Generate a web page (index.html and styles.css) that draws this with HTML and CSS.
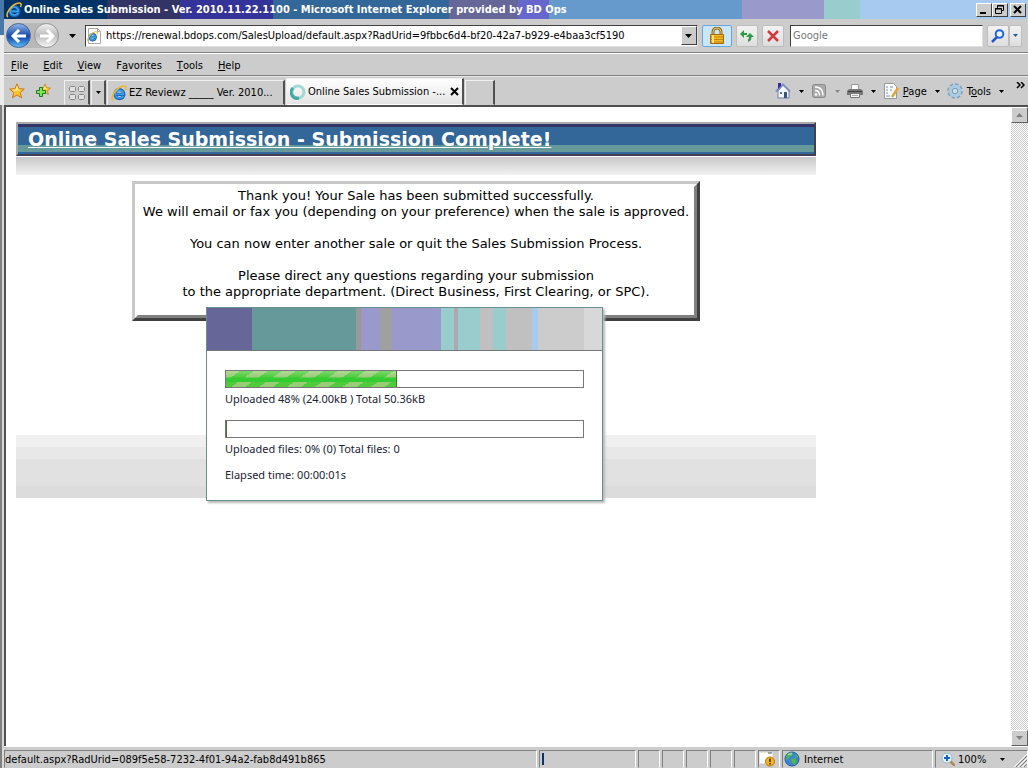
FILE: index.html
```
<!DOCTYPE html>
<html lang="en">
  <head>
    <meta charset="utf-8">
    <title>Online Sales Submission</title>
    <link rel="stylesheet" href="styles.css">
  </head>

  <body>
    <svg class="defs" aria-hidden="true">
      <symbol id="arrow" viewBox="0 0 7 4"><path d="M0 0h7L3.5 4z" fill="currentColor"/></symbol>
      <symbol id="ie" viewBox="0 0 16 16">
        <path d="M12.500 10.800C11.300 14.600 4 14.800 4 9c0-6 8.800-5.800 8.800.3H5.500" fill="none" stroke="#1765b8" stroke-width="3.200"/>
        <path d="M12.200 10.800C11 14 4.300 14 4.300 9c0-5.300 8-5 8 .3H5.500" fill="none" stroke="#3ba0ee" stroke-width="1.600"/>
        <path d="M2 15C-1.200 12.500 5.500 1.500 13.300 1c2.200-.1 2.200 1.800 1.200 4" fill="none" stroke="#efb72b" stroke-width="1.600"/>
      </symbol>
      <symbol id="star" viewBox="0 0 16 16"><path d="M8 .8l2 4.900 5.300.4-4.100 3.400 1.300 5.200L8 11.900l-4.500 2.800 1.300-5.200L.7 6.100 6 5.700z" fill="#ffc52e" stroke="#c77a12"/><path d="M8 2.500l1.300 4L13 7l-8 1-2-1.200 3.500-.3z" fill="#ffe98a"/></symbol>
    </svg>

    <div class="behind">
      <div class="behind_title"></div>
      <div class="behind_body"></div>
    </div>

    <div class="window">
      <div class="titlebar">
        <svg class="icon"><use href="#ie"/></svg>
        <span class="title">Online Sales Submission - Ver. 2010.11.22.1100 - Microsoft Internet Explorer provided by BD Ops</span>
        <button class="win_button" aria-label="Minimize"><svg width="10" height="9"><path d="M1 7h6v2H1z"/></svg></button>
        <button class="win_button" aria-label="Restore"><svg width="10" height="9"><path d="M2.500 3V.5h6v5H7M.5 3.500h6v5h-6zM2 1h7M0 4h7" fill="none" stroke="#000"/></svg></button>
        <button class="win_button close" aria-label="Close"><svg width="10" height="9"><path d="M1 1l7 7M8 1L1 8" stroke="#000" stroke-width="2"/></svg></button>
      </div>

      <div class="navbar">
        <div class="travel">
          <button class="round back" aria-label="Back"><svg width="16" height="14"><path d="M8 1L2 7l6 6M2 7h13" fill="none" stroke="#fff" stroke-width="3"/></svg></button>
          <button class="round forward" aria-label="Forward"><svg width="16" height="14"><path d="M8 1l6 6-6 6M14 7H1" fill="none" stroke="#fff" stroke-width="3"/></svg></button>
        </div>
        <button class="drop" aria-label="Recent pages"><svg class="arrow"><use href="#arrow"/></svg></button>
        <div class="address">
          <svg class="icon"><path d="M2.500.5h9l3 3v12h-12z" fill="#fff" stroke="#aaa"/><path d="M11.500.5v3h3" fill="none" stroke="#aaa"/><use href="#ie" x="1" y="3" width="11" height="11"/></svg>
          <input type="text" aria-label="Address" value="https://renewal.bdops.com/SalesUpload/default.aspx?RadUrid=9fbbc6d4-bf20-42a7-b929-e4baa3cf5190">
          <button class="combo" aria-label="Show addresses"><svg class="arrow"><use href="#arrow"/></svg></button>
        </div>
        <button class="tool lock" aria-label="Security report">
          <svg width="16" height="18"><path d="M4 8V5a4 4 0 0 1 8 0v3" fill="none" stroke="#8d6a20" stroke-width="3"/><path d="M4 8V5a4 4 0 0 1 8 0v3" fill="none" stroke="#e6c45e"/><path d="M1.500 7.500h13v9h-13z" fill="#f5b921" stroke="#a56a0c"/><path d="M2 10h12M2 12.500h12M2 15h12" stroke="#c5820f"/><path d="M3 8h2v8H3z" fill="#ffe27a"/></svg>
        </button>
        <button class="tool" aria-label="Refresh">
          <svg width="14" height="12"><path d="M4 0L0 4l4 4V5h3V3H4z" fill="#2d9c43"/><path d="M10 3l4 4h-2.500q0 4-3.500 5V9.500Q9 9 9 7H6z" fill="#2d9c43"/></svg>
        </button>
        <button class="tool" aria-label="Stop">
          <svg width="14" height="14"><path d="M2 2l10 10M12 2L2 12" stroke="#d3363b" stroke-width="2.500"/></svg>
        </button>
        <input class="search" type="text" aria-label="Search" placeholder="Google">
        <div class="search_buttons">
          <button class="tool" aria-label="Go"><svg width="14" height="14"><circle cx="8.500" cy="5" r="3.800" fill="#eaf5ff" stroke="#2365db" stroke-width="2"/><path d="M6 8l-5 5" stroke="#2358c5" stroke-width="2.500"/></svg></button>
          <button class="tool narrow" aria-label="Search options"><svg class="arrow tiny"><use href="#arrow"/></svg></button>
        </div>
      </div>

      <div class="menubar">
        <button><u>F</u>ile</button>
        <button><u>E</u>dit</button>
        <button><u>V</u>iew</button>
        <button>F<u>a</u>vorites</button>
        <button><u>T</u>ools</button>
        <button><u>H</u>elp</button>
      </div>

      <div class="tabbar">
        <button class="fav" aria-label="Favorites Center"><svg class="icon"><use href="#star"/></svg></button>
        <button class="fav" aria-label="Add to Favorites"><svg class="icon"><use href="#star" x="4" width="12" height="13"/><path d="M4.500 4.500h3v3h3v3h-3v3h-3v-3h-3v-3h3z" fill="#7fe35c" stroke="#187a1c"/></svg></button>
        <div class="tabs">
          <button class="tab quick" aria-label="Quick Tabs"><svg width="16" height="14"><path d="M1.500.5h4l1 1v3l-1 1h-4l-1-1v-3zM10.500.5h4l1 1v3l-1 1h-4l-1-1v-3zM1.500 8.500h4l1 1v3l-1 1h-4l-1-1v-3zM10.500 8.500h4l1 1v3l-1 1h-4l-1-1v-3z" fill="#e2e2e2" stroke="#858585"/></svg></button>
          <button class="tab list" aria-label="Tab List"><svg class="arrow tiny"><use href="#arrow"/></svg></button>
          <button class="tab page_tab"><svg class="icon"><use href="#ie"/></svg>EZ Reviewz _____ Ver. 2010...</button>
          <div class="tab page_tab active">
            <svg class="icon"><circle cx="8" cy="8" r="6" fill="none" stroke="#9fdad6" stroke-width="3"/><path d="M3 4a6 6 0 0 0 6 10" fill="none" stroke="#45a6a8" stroke-width="3"/></svg>
            <a href="#">Online Sales Submission -...</a>
            <button class="tab_close" aria-label="Close Tab"><svg width="9" height="9"><path d="M1 1l7 7M8 1L1 8" stroke="#000" stroke-width="2"/></svg></button>
          </div>
          <button class="tab new" aria-label="New Tab"></button>
        </div>
        <div class="commands">
          <button aria-label="Home"><svg class="icon"><path d="M3 8v7h11V7L8 2z" fill="#f4f6fb" stroke="#6e7db0"/><path d="M1 8.500L8 1.500l7 7" fill="none" stroke="#7f8fc4" stroke-width="2"/><path d="M3 0h3v3L3 6z" fill="#332c9a"/><path d="M9 9h3v6H9z" fill="#3d5377"/><path d="M5 9h2v2H5z" fill="#4b70a8"/></svg><svg class="arrow tiny"><use href="#arrow"/></svg></button>
          <button class="off" aria-label="Feeds"><svg class="icon"><rect x="1.500" y="1.500" width="13" height="13" rx="2" fill="#a9a9a9" stroke="#8a8a8a"/><circle cx="5" cy="11.500" r="1.300" fill="#fff"/><path d="M4 7.500q4.500 0 4.500 5M4 4q8 0 8 8.500" fill="none" stroke="#fff" stroke-width="1.500"/></svg><svg class="arrow tiny"><use href="#arrow"/></svg></button>
          <button aria-label="Print"><svg class="icon"><path d="M4.500 1.500h7v5h-7z" fill="#fff" stroke="#9a9a9a"/><path d="M2 6h12l2 2v4H0V8z" fill="#777"/><path d="M1 8.500h14" stroke="#3e3e3e"/><path d="M3.500 10.500h9v4h-9z" fill="#f5f5f5" stroke="#777"/><path d="M5 12.500h6" stroke="#aaa"/></svg><svg class="arrow tiny"><use href="#arrow"/></svg></button>
          <button><svg class="icon"><path d="M1.500.5h9l3 3v12h-12z" fill="#fafafa" stroke="#999"/><path d="M3 4h2M7 4h3M3 7h2M7 7h2M3 10h2M3 13h4" stroke="#7f8fa3"/><path d="M15 5l-6 9" stroke="#e2a637" stroke-width="2.500"/></svg><span><u>P</u>age</span><svg class="arrow tiny"><use href="#arrow"/></svg></button>
          <button><svg class="icon"><circle cx="8" cy="8" r="6.800" fill="none" stroke="#7fa3c0" stroke-width="2" stroke-dasharray="3.500 1.800"/><circle cx="8" cy="8" r="4.500" fill="none" stroke="#a9cce4" stroke-width="3.500"/><circle cx="8" cy="8" r="2.700" fill="#d6dde2" stroke="#7c9ab3"/></svg><span>T<u>o</u>ols</span><svg class="arrow tiny"><use href="#arrow"/></svg></button>
        </div>
        <button class="more" aria-label="More commands"><svg width="9" height="7"><path d="M1 0l3 3-3 3M5 0l3 3-3 3" fill="none" stroke="#000" stroke-width="1.500"/></svg></button>
      </div>

      <div class="viewport">
        <div class="page">
          <div class="site">
            <h1>Online Sales Submission - Submission Complete!</h1>
            <div class="header_shadow"></div>

            <div class="message">
              <p>
                Thank you! Your Sale has been submitted successfully.<br>
                We will email or fax you (depending on your preference) when the sale is approved.<br>
                <br>
                You can now enter another sale or quit the Sales Submission Process.<br>
                <br>
                Please direct any questions regarding your submission<br>
                to the appropriate department. (Direct Business, First Clearing, or SPC).
              </p>
            </div>

            <div class="footer"></div>

            <div class="upload" role="dialog" aria-label="Upload">
              <div class="upload_header"></div>
              <div class="upload_body">
                <div class="bar" role="progressbar" aria-labelledby="uploaded"><div class="fill" style="width:48%"></div></div>
                <p id="uploaded">Uploaded 48% (24.00kB ) Total 50.36kB</p>
                <div class="bar" role="progressbar" aria-labelledby="files"><div class="fill" style="width:0%"></div></div>
                <p id="files">Uploaded files: 0% (0) Total files: 0</p>
                <p>Elapsed time: 00:00:01s</p>
              </div>
            </div>
          </div>
        </div>
        <div class="scrollbar">
          <button aria-label="Scroll up"><svg class="arrow up"><use href="#arrow"/></svg></button>
          <button aria-label="Scroll down"><svg class="arrow"><use href="#arrow"/></svg></button>
        </div>
      </div>

      <div class="statusbar">
        <div class="cell status">default.aspx?RadUrid=089f5e58-7232-4f01-94a2-fab8d491b865</div>
        <div class="cell loading"><div class="chunk"></div></div>
        <div class="cell"></div>
        <div class="cell"></div>
        <div class="cell"></div>
        <div class="cell"></div>
        <div class="cell"></div>
        <div class="cell"><svg class="icon"><path d="M.5 1.500h13v11H.5z" fill="#fff" stroke="#e5e5e5"/><path d="M9 2h4" stroke="#556"/><circle cx="11" cy="10.500" r="4.500" fill="#f5b51d" stroke="#b97708"/><path d="M11 7.500v3.500M11 12v1.500" stroke="#402800" stroke-width="1.500"/></svg></div>
        <div class="cell zone"><svg class="icon"><circle cx="8" cy="8" r="7" fill="#3b83dc" stroke="#245a9b"/><path d="M3 3q4-3 6-1l-1 3-3 1-1 3-2-1zM7 8l4-1 2 3-2 4-3-2zM12 3l2 3-2 1-1-2z" fill="#50b748"/><path d="M4 4q2-2 4-1" stroke="#bfe5ff" fill="none"/></svg>Internet</div>
        <button class="cell zoom"><svg class="icon small"><path d="M9 9l5 5" stroke="#b58550" stroke-width="2.500"/><circle cx="6" cy="6" r="5" fill="#eaf6ff" stroke="#8fb6d6"/><path d="M6 3v6M3 6h6" stroke="#1762c4" stroke-width="2"/></svg><span>100%</span><svg class="arrow tiny"><use href="#arrow"/></svg><svg class="grip" width="13" height="13"><path d="M0 13L13 0M4 13l9-9M8 13l5-5" stroke="#fff"/><path d="M2 13L13 2M6 13l7-7M10 13l3-3" stroke="#808080"/></svg></button>
      </div>
    </div>
  </body>
</html>
```
FILE: styles.css
```
*{
  box-sizing: border-box;
}
body{
  margin: 0;
  height: 100vh;
  display: flex;
  overflow: hidden;
  background: #ccc;
  color: #000;
  font: 11px "DejaVu Sans Condensed", "DejaVu Sans", sans-serif;
}
button, input{
  font: inherit;
  color: inherit;
  border: 0;
  padding: 0;
  margin: 0;
  background: none;
  min-width: 0;
}
button{
  display: flex;
  align-items: center;
  justify-content: center;
  white-space: nowrap;
}
svg{
  display: block;
  flex: none;
}
.defs{
  display: none;
}
.icon{
  width: 16px;
  height: 16px;
}
.icon.small{
  width: 14px;
  height: 14px;
}
.arrow{
  width: 7px;
  height: 4px;
}
.arrow.tiny{
  width: 5px;
  height: 3px;
}
.arrow.up{
  transform: rotate(180deg);
}

/* edge of the window underneath */
.behind{
  width: 4px;
  display: flex;
  flex-direction: column;
  background: #ececec;
}
.behind_title{
  height: 35px;
  background: #4878aa;
}
.behind_body{
  flex: 1;
  margin-top: 70px;
  border-left: 2px solid #808080;
  background: #d8d8d8;
}
.window{
  flex: 1;
  min-width: 0;
  display: flex;
  flex-direction: column;
}

/* title bar */
.titlebar{
  height: 19px;
  display: flex;
  align-items: center;
  padding: 0 2px;
  background: linear-gradient(90deg, #003366 0 103px, #333366 103px 176px, #333399 176px 269px, #336699 269px 445px, #666699 445px 514px, #6666cc 514px 545px, #6699cc 545px 738px, #9999cc 738px 820px, #99cccc 820px 856px, #a6caf0 856px);
}
.title{
  flex: 1;
  padding-left: 2px;
  color: #fff;
  font-weight: bold;
  white-space: nowrap;
  overflow: hidden;
}
.win_button{
  width: 16px;
  height: 14px;
  background: #ccc;
  border: 1px solid;
  border-color: #fff #404040 #404040 #fff;
}
.win_button.close{
  margin-left: 2px;
}

/* address row */
.navbar{
  height: 34px;
  display: flex;
  align-items: center;
  gap: 4px;
  padding: 0 6px 0 2px;
  border-bottom: 1px solid #808080;
}
.travel{
  display: flex;
  gap: 3px;
  border-radius: 13px;
  background: #b8b8b8;
}
.round{
  width: 25px;
  height: 25px;
  border-radius: 50%;
  border: 1px solid #47679c;
}
.back{
  background: linear-gradient(#8eb4e8, #1d4ea8 50%, #1c50b4 60%, #58bdf3);
}
.forward{
  border-color: #9a9a9a;
  background: linear-gradient(#eee, #bbb 50%, #c8c8c8 60%, #f4f4f4);
}
.drop{
  width: 18px;
  height: 22px;
}
.address{
  flex: 1;
  height: 22px;
  display: flex;
  align-items: center;
  background: #fff;
  border: 1px solid;
  border-color: #404040 #e0e0e0 #e0e0e0 #404040;
}
.address input{
  flex: 1;
  padding-left: 4px;
}
.combo{
  width: 16px;
  height: 19px;
  background: #ccc;
  border: 1px solid;
  border-color: #fff #404040 #404040 #fff;
}
.tool{
  width: 22px;
  height: 22px;
  background: linear-gradient(#f2f2f2, #dedede);
  border: 1px solid #bdbdbd;
  border-radius: 2px;
}
.tool.lock{
  width: 30px;
  background: #c9e6fb;
  border-color: #68a6db;
}
.search{
  width: 19%;
  height: 22px;
  margin-left: 2px;
  padding: 0 2px;
  background: #fff;
  border: 1px solid;
  border-color: #404040 #e0e0e0 #e0e0e0 #404040;
}
.search::placeholder{
  color: #777;
}
.search_buttons{
  display: flex;
}
.tool.narrow{
  width: 13px;
  color: #1d5d8f;
}

/* menus */
.menubar{
  height: 23px;
  display: flex;
  gap: 15px;
  padding: 2px 0 0 7px;
  border-top: 1px solid #fff;
  border-bottom: 1px solid #808080;
}

/* tabs and command bar */
.tabbar{
  height: 31px;
  display: flex;
  border-top: 1px solid #e8e8e8;
  border-bottom: 2px solid #505050;
}
.fav{
  width: 26px;
  height: 28px;
}
.tabs{
  flex: 1;
  min-width: 0;
  display: flex;
  align-items: flex-end;
  gap: 1px;
  padding-left: 8px;
}
.tab{
  height: 25px;
  border: 1px solid;
  border-color: #f0f0f0 #505050 transparent #f0f0f0;
  border-right-width: 2px;
}
.quick{
  width: 26px;
}
.list{
  width: 15px;
}
.page_tab{
  width: 178px;
  display: flex;
  align-items: center;
  justify-content: flex-start;
  gap: 2px;
  padding-left: 3px;
  overflow: hidden;
}
.active{
  height: 27px;
  background: linear-gradient(#fff, #e4e4e4);
}
.active a{
  flex: 1;
  color: #000;
  text-decoration: none;
  white-space: nowrap;
}
.tab_close{
  width: 20px;
}
.new{
  width: 30px;
}
.commands{
  display: flex;
  height: 28px;
  gap: 5px;
  padding-right: 6px;
}
.commands button{
  gap: 4px;
}
.commands .arrow{
  margin: 0 2px 0 4px;
}
.off .arrow{
  color: #888;
}
.more{
  width: 16px;
  height: 16px;
}

/* page area */
.viewport{
  flex: 1;
  min-height: 0;
  display: flex;
  border-left: 2px solid #505050;
}
.page{
  flex: 1;
  min-width: 0;
  padding: 15px 10px;
  overflow: hidden;
  background: #fff;
  font: 13px/16px "DejaVu Sans", Verdana, sans-serif;
}
.site{
  position: relative;
  max-width: 800px;
}
h1{
  margin: 0;
  height: 34px;
  padding-left: 10px;
  border: 2px solid;
  border-color: #a8a8b0 #404050 #404050 #a8a8b0;
  background: linear-gradient(#333366 0 3px, #336699 3px 21px, #669999 21px 28px, #336699 28px);
  color: #fff;
  font-size: 19px;
  line-height: 30px;
  text-decoration: underline;
  text-decoration-thickness: 1px;
}
.header_shadow{
  height: 19px;
  margin-bottom: 6px;
  border-top: 1px solid #fff;
  background: linear-gradient(#c8c8c8, #f2f2f2);
}
.message{
  width: fit-content;
  margin: 0 auto;
  border: 3px solid;
  border-color: #c8c8c8 #404040 #404040 #c8c8c8;
}
.message p{
  margin: 0;
  padding: 1px 5px 15px;
  border: 3px solid;
  border-color: #fff #808080 #808080 #fff;
  text-align: center;
}
.footer{
  height: 63px;
  margin-top: 114px;
  background: linear-gradient(#f0f0f0 0 12px, #e8e8e8 12px 24px, #e1e1e1 24px 51px, #dcdcdc 51px);
}

/* upload progress, floats over the page */
.upload{
  position: absolute;
  top: 185px;
  left: 190px;
  width: 397px;
  background: #fff;
  border: 1px solid #6a9090;
  box-shadow: 2px 2px 2px #bbb;
  color: #222233;
  font: 11px/16px "Noto Sans", "Open Sans", sans-serif;
}
.upload_header{
  height: 43px;
  border-bottom: 1px solid #777;
  background: linear-gradient(90deg, #666699 0 45px, #669999 45px 149px, #999 149px 154px, #9999cc 154px 173px, #a0a0a0 173px 185px, #9999cc 185px 234px, #99cccc 234px 247px, #b0a8b0 247px 251px, #99cccc 251px 273px, #c0c0c0 273px 286px, #99cccc 286px 299px, #c0c0c0 299px 325px, #a6caf0 325px 331px, #ccc 331px 377px, #d8d8d8 377px);
}
.upload_body{
  padding: 19px 18px 17px;
}
.upload_body p{
  margin: 3px 0 13px;
}
.upload_body p:last-child{
  margin: -3px 0 0;
}
.bar{
  height: 18px;
  border: 1px solid #777;
}
.fill{
  height: 100%;
  border-right: 1px solid #3a7a28;
  background: linear-gradient(rgba(255,255,255,.25), transparent 6px, #33cc33 7px 11px, transparent 11px), repeating-linear-gradient(145deg, #99cc77 0 8px, #4fcb3c 8px 16px);
}

/* scrollbar */
.scrollbar{
  width: 17px;
  display: flex;
  flex-direction: column;
  justify-content: space-between;
  background: repeating-conic-gradient(#fff 0 25%, #ccc 0 50%) 0 0 / 2px 2px;
}
.scrollbar button{
  height: 16px;
  background: #ccc;
  border: 1px solid;
  border-color: #fff #606060 #606060 #fff;
  color: #808080;
}

/* status bar */
.statusbar{
  height: 22px;
  display: flex;
  gap: 2px;
  padding-top: 3px;
  border-top: 1px solid #fff;
}
.cell{
  width: 22px;
  display: flex;
  align-items: center;
  border: 1px solid;
  border-color: #808080 #fff #ccc #808080;
  white-space: nowrap;
}
.status{
  flex: 1;
}
.loading{
  width: 97px;
  padding-left: 2px;
}
.chunk{
  width: 2px;
  height: 12px;
  background: #003378;
}
.zone{
  width: 151px;
  gap: 4px;
  padding-left: 1px;
}
.zoom{
  width: 93px;
  gap: 3px;
  padding-left: 5px;
}
.zoom span{
  flex: 1;
  text-align: left;
}
.grip{
  align-self: flex-end;
  margin-left: 6px;
}
```
